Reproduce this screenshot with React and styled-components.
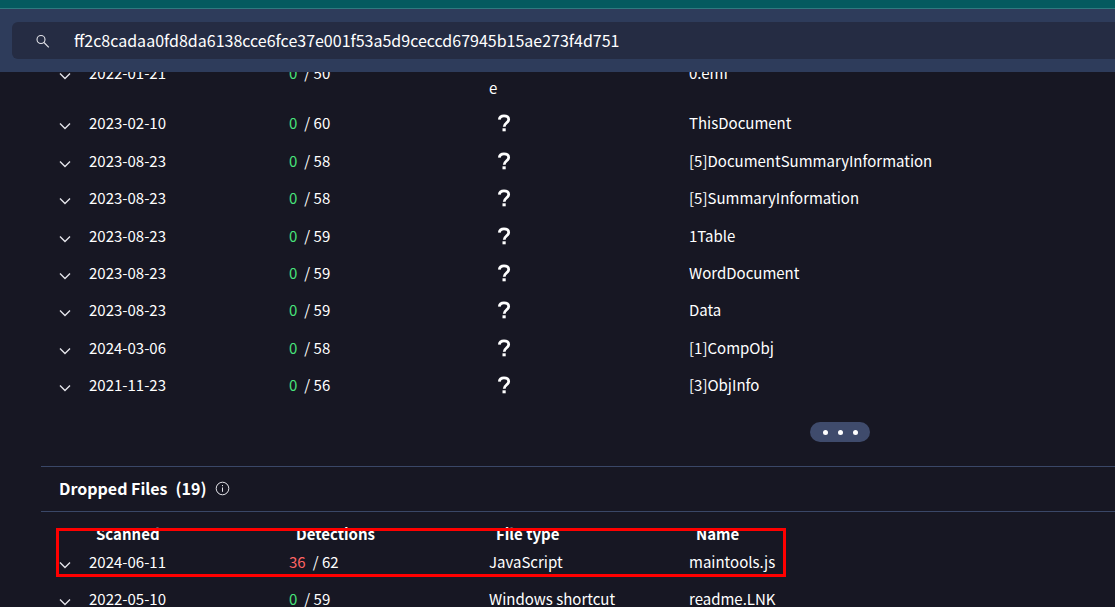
import React from "react";
import styled, { createGlobalStyle } from "styled-components";

const GlobalStyle = createGlobalStyle`
  * { box-sizing: border-box; }
  body {
    margin: 0;
    background: #171723;
    color: #fff;
    font: 15px/30px "Noto Sans CJK SC", "Open Sans", sans-serif;
  }
`;

const Page = styled.div`
  position: relative;
  height: 100vh;
  overflow: hidden;
  display: flex;
  flex-direction: column;
`;

const Header = styled.header`
  flex: none;
  padding: 13px 0 13px 12px;
  background: #2e3c5b;
  border-top: 1px solid #2f7a80;
`;

const TopStrip = styled.div`
  flex: none;
  height: 8px;
  background: #045a5f;
`;

const SearchBox = styled.label`
  display: flex;
  align-items: center;
  height: 37px;
  padding-left: 24px;
  gap: 24px;
  background: #252c43;
  border-radius: 6px 0 0 6px;
`;

const SearchInput = styled.input`
  flex: 1;
  min-width: 0;
  padding: 0 0 2px;
  border: 0;
  outline: 0;
  background: none;
  color: #fff;
  font: inherit;
  font-size: 16px;
`;

const Content = styled.main`
  flex: 1;
  min-height: 0;
  overflow: hidden;
  padding-left: 41px;
`;

const Table = styled.table`
  width: 100%;
  table-layout: fixed;
  border-collapse: collapse;
`;

const ScrolledTable = styled(Table)`
  height: 362px;
  margin-top: -30px;
`;

const IconCol = styled.col`
  width: 48px;
`;

const DataCol = styled.col`
  width: 200px;
`;

const Row = styled.tr`
  height: ${(p) => (p.$tall ? "62px" : "37px")};
`;

const Cell = styled.td`
  padding: 3px 0;
  vertical-align: middle;
  white-space: nowrap;
`;

const WrappedCell = styled(Cell)`
  padding: 30px 0 0;
`;

const HeadCell = styled.th`
  height: 31px;
  padding: 12px 0 0 7px;
  line-height: 19px;
  font-weight: 700;
  text-align: left;
`;

const ExpandButton = styled.button`
  display: block;
  margin-left: 18px;
  padding: 6px 0 0;
  border: 0;
  background: none;
  color: #e4e4ea;
  line-height: 0;
`;

const Count = styled.span`
  margin-right: 7px;
  color: ${(p) => (p.$bad ? "#ff6464" : "#48e47b")};
`;

const MoreRow = styled.div`
  display: flex;
  padding: 18px 0 24px 769px;
`;

const MoreButton = styled.button`
  display: flex;
  align-items: center;
  justify-content: center;
  gap: 10px;
  width: 60px;
  height: 20px;
  padding: 0;
  border: 0;
  border-radius: 10px;
  background: #3f4b6c;
`;

const Dot = styled.span`
  width: 5px;
  height: 5px;
  border-radius: 50%;
  background: #fff;
`;

const SectionTitle = styled.h2`
  display: flex;
  align-items: center;
  gap: 8px;
  height: 46px;
  margin: 0;
  padding: 0 0 2px 18px;
  border: solid #3a4767;
  border-width: 1px 0;
  font-size: 16px;
  font-weight: 700;
`;

const Highlight = styled.div`
  position: absolute;
  top: 528px;
  left: 56px;
  width: 730px;
  height: 49px;
  border: 3px solid #f00;
  pointer-events: none;
`;

const SearchIcon = () => (
  <svg width="14" height="14" viewBox="0 0 14 14" fill="none" stroke="#e4e4ea" strokeWidth="1.1">
    <circle cx="5" cy="5.5" r="4" />
    <path d="M8 8.500L12.800 13.300" />
  </svg>
);

const Chevron = () => (
  <svg width="12" height="8" viewBox="0 0 12 8" fill="none" stroke="currentColor" strokeWidth="1.4">
    <path d="M1 1.5l5 5 5-5" />
  </svg>
);

const InfoIcon = () => (
  <svg width="15" height="15" viewBox="0 0 15 15" fill="none" stroke="#e4e4ea">
    <circle cx="7.5" cy="7.5" r="6.3" />
    <path d="M7.5 6.5v4.3M7.5 4v1.2" />
  </svg>
);

const UnknownIconSvg = styled.svg`
  display: block;
  margin-left: 3px;
`;

const UnknownIcon = () => (
  <UnknownIconSvg width="24" height="20" viewBox="0 0 24 20" role="img" aria-label="Unknown type">
    <path d="M7.3 6.6C7.600 3.800 9.500 2.800 12 2.800c2.800 0 4.700 1.400 4.700 3.800 0 3-4.500 3.400-4.500 7.200" fill="none" stroke="#fff" strokeWidth="2.8" />
    <rect x="10.5" y="15.3" width="3.2" height="3" fill="#fff" />
  </UnknownIconSvg>
);

const embedded = [
  { date: "2023-02-10", total: 60, name: "ThisDocument" },
  { date: "2023-08-23", total: 58, name: "[5]DocumentSummaryInformation" },
  { date: "2023-08-23", total: 58, name: "[5]SummaryInformation" },
  { date: "2023-08-23", total: 59, name: "1Table" },
  { date: "2023-08-23", total: 59, name: "WordDocument" },
  { date: "2023-08-23", total: 59, name: "Data" },
  { date: "2024-03-06", total: 58, name: "[1]CompObj" },
  { date: "2021-11-23", total: 56, name: "[3]ObjInfo" },
];

const dropped = [
  { date: "2024-06-11", hits: 36, total: 62, type: "JavaScript", name: "maintools.js" },
  { date: "2022-05-10", total: 59, type: "Windows shortcut", name: "readme.LNK" },
];

const Columns = () => (
  <colgroup>
    <IconCol />
    <DataCol />
    <DataCol />
    <DataCol />
    <col />
  </colgroup>
);

const FileRow = ({ date, hits = 0, total, type, wrapped, name }) => (
  <Row $tall={Boolean(wrapped)}>
    <Cell>
      <ExpandButton aria-label={`Expand ${name}`}>
        <Chevron />
      </ExpandButton>
    </Cell>
    <Cell>{date}</Cell>
    <Cell>
      <Count $bad={hits > 0}>{hits}</Count>/ {total}
    </Cell>
    {wrapped ? <WrappedCell>{wrapped}</WrappedCell> : <Cell>{type || <UnknownIcon />}</Cell>}
    <Cell>{name}</Cell>
  </Row>
);

export default function App() {
  return (
    <Page>
      <GlobalStyle />
      <TopStrip />
      <Header>
        <SearchBox>
          <SearchIcon />
          <SearchInput
            type="text"
            aria-label="Search"
            defaultValue="ff2c8cadaa0fd8da6138cce6fce37e001f53a5d9ceccd67945b15ae273f4d751"
          />
        </SearchBox>
      </Header>
      <Content>
        <ScrolledTable>
          <Columns />
          <tbody>
            <FileRow date="2022-01-21" total={50} wrapped="e" name="0.emf" />
            {embedded.map((file) => (
              <FileRow key={file.name} {...file} />
            ))}
          </tbody>
        </ScrolledTable>
        <MoreRow>
          <MoreButton aria-label="Show more">
            <Dot />
            <Dot />
            <Dot />
          </MoreButton>
        </MoreRow>
        <SectionTitle>
          <span>Dropped Files</span>
          <span>(19)</span>
          <InfoIcon />
        </SectionTitle>
        <Table>
          <Columns />
          <thead>
            <tr>
              <td />
              <HeadCell scope="col">Scanned</HeadCell>
              <HeadCell scope="col">Detections</HeadCell>
              <HeadCell scope="col">File type</HeadCell>
              <HeadCell scope="col">Name</HeadCell>
            </tr>
          </thead>
          <tbody>
            {dropped.map((file) => (
              <FileRow key={file.name} {...file} />
            ))}
          </tbody>
        </Table>
      </Content>
      <Highlight />
    </Page>
  );
}
